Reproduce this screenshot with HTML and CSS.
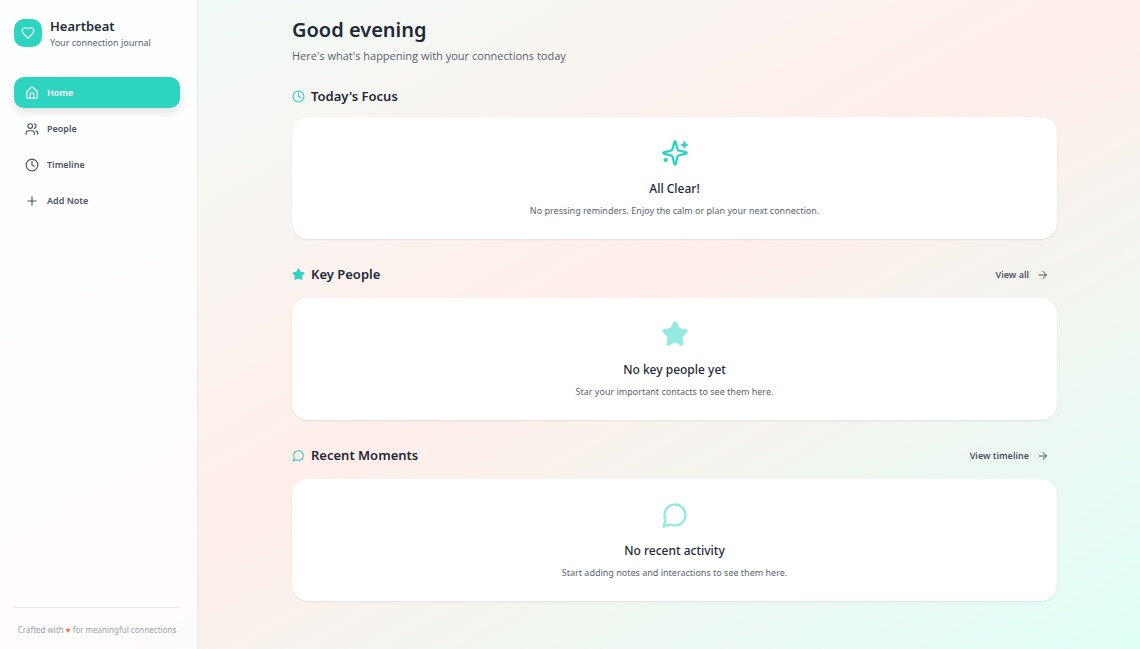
FILE: index.html
```html
<!DOCTYPE html>
<html lang="en">
<head>
<meta charset="utf-8">
<meta name="viewport" content="width=device-width, initial-scale=1">
<title>Heartbeat</title>
<link rel="stylesheet" href="styles.css">
</head>
<body>
<div class="app">
  <aside class="sidebar">
    <header class="brand">
      <span class="brand-mark">
        <svg class="icon" viewBox="0 0 24 24"><path d="M19 14c1.49-1.46 3-3.21 3-5.5A5.5 5.5 0 0 0 16.5 3c-1.76 0-3 .5-4.5 2-1.5-1.5-2.74-2-4.5-2A5.5 5.5 0 0 0 2 8.5c0 2.3 1.5 4.05 3 5.5l7 7Z"/></svg>
      </span>
      <div>
        <p class="brand-name">Heartbeat</p>
        <p class="brand-tag">Your connection journal</p>
      </div>
    </header>
    <nav class="nav">
      <a class="nav-link active" href="#home" aria-current="page">
        <svg class="icon" viewBox="0 0 24 24"><path d="M15 21v-8a1 1 0 0 0-1-1h-4a1 1 0 0 0-1 1v8"/><path d="M3 10a2 2 0 0 1 .709-1.528l7-6a2 2 0 0 1 2.582 0l7 6A2 2 0 0 1 21 10v9a2 2 0 0 1-2 2H5a2 2 0 0 1-2-2z"/></svg>
        Home
      </a>
      <a class="nav-link" href="#people">
        <svg class="icon" viewBox="0 0 24 24"><path d="M16 21v-2a4 4 0 0 0-4-4H6a4 4 0 0 0-4 4v2"/><circle cx="9" cy="7" r="4"/><path d="M22 21v-2a4 4 0 0 0-3-3.87"/><path d="M16 3.13a4 4 0 0 1 0 7.75"/></svg>
        People
      </a>
      <a class="nav-link" href="#timeline">
        <svg class="icon" viewBox="0 0 24 24"><circle cx="12" cy="12" r="10"/><path d="M12 6v6l4 2"/></svg>
        Timeline
      </a>
      <a class="nav-link" href="#add-note">
        <svg class="icon" viewBox="0 0 24 24"><path d="M5 12h14M12 5v14"/></svg>
        Add Note
      </a>
    </nav>
    <footer class="credit">Crafted with <span class="credit-heart">♥</span> for meaningful connections</footer>
  </aside>

  <main class="main">
    <div class="content">
      <header class="intro">
        <h1 class="greeting">Good evening</h1>
        <p class="subtitle">Here's what's happening with your connections today</p>
      </header>

      <section class="section">
        <div class="section-head">
          <h2 class="section-title">
            <svg class="icon" viewBox="0 0 24 24"><circle cx="12" cy="12" r="10"/><path d="M12 6v6l4 2"/></svg>
            Today's Focus
          </h2>
        </div>
        <div class="card">
          <svg class="icon card-icon" viewBox="0 0 24 24"><path d="M9.937 15.5A2 2 0 0 0 8.5 14.063l-6.135-1.582a.5.5 0 0 1 0-.962L8.5 9.936A2 2 0 0 0 9.937 8.5l1.582-6.135a.5.5 0 0 1 .963 0L14.063 8.5A2 2 0 0 0 15.5 9.937l6.135 1.581a.5.5 0 0 1 0 .964L15.5 14.063a2 2 0 0 0-1.437 1.437l-1.582 6.135a.5.5 0 0 1-.963 0z"/><path d="M20 3v4M22 5h-4M4 17v2M5 18H3"/></svg>
          <h3 class="card-title">All Clear!</h3>
          <p class="card-text">No pressing reminders. Enjoy the calm or plan your next connection.</p>
        </div>
      </section>

      <section class="section">
        <div class="section-head">
          <h2 class="section-title">
            <svg class="icon filled" viewBox="0 0 24 24"><path d="M11.525 2.295a.53.53 0 0 1 .95 0l2.31 4.679a2.123 2.123 0 0 0 1.595 1.16l5.166.756a.53.53 0 0 1 .294.904l-3.736 3.638a2.123 2.123 0 0 0-.611 1.878l.882 5.14a.53.53 0 0 1-.771.56l-4.618-2.428a2.122 2.122 0 0 0-1.973 0L6.396 21.01a.53.53 0 0 1-.77-.56l.881-5.139a2.122 2.122 0 0 0-.611-1.879L2.16 9.795a.53.53 0 0 1 .294-.906l5.165-.755a2.122 2.122 0 0 0 1.597-1.16z"/></svg>
            Key People
          </h2>
          <a class="more" href="#people">View all
            <svg class="icon" viewBox="0 0 24 24"><path d="M5 12h14M12 5l7 7-7 7"/></svg>
          </a>
        </div>
        <div class="card">
          <svg class="icon filled card-icon faded" viewBox="0 0 24 24"><path d="M11.525 2.295a.53.53 0 0 1 .95 0l2.31 4.679a2.123 2.123 0 0 0 1.595 1.16l5.166.756a.53.53 0 0 1 .294.904l-3.736 3.638a2.123 2.123 0 0 0-.611 1.878l.882 5.14a.53.53 0 0 1-.771.56l-4.618-2.428a2.122 2.122 0 0 0-1.973 0L6.396 21.01a.53.53 0 0 1-.77-.56l.881-5.139a2.122 2.122 0 0 0-.611-1.879L2.16 9.795a.53.53 0 0 1 .294-.906l5.165-.755a2.122 2.122 0 0 0 1.597-1.16z"/></svg>
          <h3 class="card-title">No key people yet</h3>
          <p class="card-text">Star your important contacts to see them here.</p>
        </div>
      </section>

      <section class="section">
        <div class="section-head">
          <h2 class="section-title">
            <svg class="icon" viewBox="0 0 24 24"><path d="M7.9 20A9 9 0 1 0 4 16.1L2 22Z"/></svg>
            Recent Moments
          </h2>
          <a class="more" href="#timeline">View timeline
            <svg class="icon" viewBox="0 0 24 24"><path d="M5 12h14M12 5l7 7-7 7"/></svg>
          </a>
        </div>
        <div class="card">
          <svg class="icon card-icon faded" viewBox="0 0 24 24"><path d="M7.9 20A9 9 0 1 0 4 16.1L2 22Z"/></svg>
          <h3 class="card-title">No recent activity</h3>
          <p class="card-text">Start adding notes and interactions to see them here.</p>
        </div>
      </section>
    </div>
  </main>
</div>
</body>
</html>
```
FILE: styles.css
```css
:root {
  --teal: #2dd4bf;
  --ink: #1f2937;
  --muted: #5b6472;
}

* {
  box-sizing: border-box;
}

body,
h1,
h2,
h3,
p {
  margin: 0;
}

body {
  font-family: "Noto Sans", "Open Sans", sans-serif;
  font-size: 9px;
  color: var(--ink);
}

a {
  color: inherit;
  text-decoration: none;
}

.icon {
  flex: none;
  width: 14px;
  height: 14px;
  fill: none;
  stroke: currentColor;
  stroke-width: 2;
  stroke-linecap: round;
  stroke-linejoin: round;
}

.filled {
  fill: currentColor;
}

.app {
  display: flex;
  min-height: 100vh;
  background: linear-gradient(to bottom right, #effdfa, #ffeeea 50%, #dffff7);
}

.sidebar {
  display: flex;
  flex-direction: column;
  flex: none;
  width: 198px;
  padding: 16px 17px 12px 14px;
  background: rgba(255, 255, 255, 0.8);
  border-right: 1px solid #e8ecec;
}

.brand {
  display: flex;
  align-items: center;
  gap: 8px;
  margin-bottom: 27px;
}

.brand-mark {
  display: grid;
  place-items: center;
  width: 28px;
  height: 28px;
  border-radius: 10px;
  background: var(--teal);
  color: #fff;
}

.brand-name {
  font-size: 13px;
  font-weight: 600;
  line-height: 20px;
}

.brand-tag {
  line-height: 14px;
  color: var(--muted);
}

.nav {
  display: grid;
  gap: 5px;
}

.nav-link {
  display: flex;
  align-items: center;
  gap: 8px;
  height: 31px;
  padding: 0 11px;
  border-radius: 10px;
  font-weight: 600;
  color: #4b5563;
}

.nav-link.active {
  background: var(--teal);
  color: #fff;
  box-shadow: 0 4px 8px rgba(0, 0, 0, 0.12);
}

.credit {
  margin-top: auto;
  padding-top: 15px;
  border-top: 1px solid #e5e7eb;
  font-size: 8px;
  line-height: 14px;
  text-align: center;
  color: #9ca3af;
}

.credit-heart {
  color: #f87155;
}

.main {
  flex: 1;
  padding: 16px 83px 48px 94px;
}

.content {
  max-width: 765px;
  margin: 0 auto;
}

.greeting {
  font-size: 20px;
  font-weight: 600;
  line-height: 28px;
}

.subtitle {
  margin-top: 4px;
  font-family: "Open Sans", "Noto Sans", sans-serif;
  font-size: 11px;
  line-height: 16px;
  color: var(--muted);
}

.section {
  margin-top: 22px;
}

.section-head {
  display: flex;
  align-items: center;
  justify-content: space-between;
  margin-bottom: 10px;
}

.section-title {
  display: flex;
  align-items: center;
  gap: 6px;
  font-size: 13px;
  font-weight: 600;
  line-height: 21px;
}

.section-title .icon {
  width: 13px;
  height: 13px;
  color: var(--teal);
}

.more {
  display: flex;
  align-items: center;
  gap: 8px;
  padding-right: 8px;
  font-weight: 600;
  line-height: 27px;
  color: #4b5563;
}

.more .icon {
  width: 12px;
  height: 12px;
}

.card {
  display: flex;
  flex-direction: column;
  align-items: center;
  padding: 22px 20px 21px;
  border-radius: 16px;
  background: #fff;
  box-shadow: 0 1px 2px rgba(0, 0, 0, 0.08);
  text-align: center;
}

.card-icon {
  width: 28px;
  height: 28px;
  color: var(--teal);
}

.faded {
  opacity: 0.5;
}

.card-title {
  margin-top: 13px;
  font-size: 12px;
  font-weight: 500;
  line-height: 18px;
}

.card-text {
  margin-top: 6px;
  line-height: 14px;
  color: var(--muted);
}
```
